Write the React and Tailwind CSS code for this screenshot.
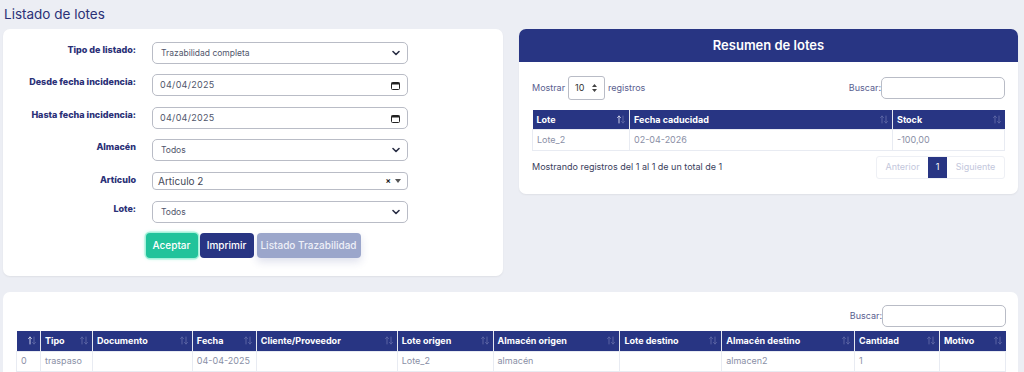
import React from "react";

const font = { fontFamily: "Inter, 'Noto Sans', sans-serif" };

const SortIcon = ({ active }) => (
  <svg width="8" height="9" viewBox="0 0 8 9" className="shrink-0">
    <g fill="none" strokeWidth="1" strokeLinecap="round">
      <path d="M2 8V1M0.5 2.5L2 1l1.5 1.5" stroke={active ? "#c9cde6" : "#5a64a3"} />
      <path d="M6 1v7M4.5 6.5L6 8l1.5-1.5" stroke="#5a64a3" />
    </g>
  </svg>
);

const Chevron = () => (
  <svg width="8" height="6" viewBox="0 0 8 6">
    <path d="M1 1.5l3 3 3-3" fill="none" stroke="#2a2f45" strokeWidth="1.6" strokeLinecap="round" strokeLinejoin="round" />
  </svg>
);

const Calendar = () => (
  <svg width="9" height="9" viewBox="0 0 9 9">
    <rect x="0.5" y="1.5" width="8" height="7" rx="1" fill="none" stroke="#222" strokeWidth="1" />
    <rect x="0.5" y="1.5" width="8" height="2" fill="#222" />
  </svg>
);

const FakeSelect = ({ value }) => (
  <div className="flex h-[22px] w-[256px] items-center justify-between rounded-[5px] border border-[#b9bcc6] bg-white pl-[8px] pr-[7px] text-[8.5px] text-[#50556b]">
    <span>{value}</span>
    <Chevron />
  </div>
);

const DateBox = ({ value }) => (
  <div className="flex h-[22px] w-[256px] items-center justify-between rounded-[5px] border border-[#b9bcc6] bg-white pl-[7px] pr-[7px] text-[9px] text-[#50556b]">
    <span className="tracking-[0.3px]">{value}</span>
    <Calendar />
  </div>
);

const FormRow = ({ label, children, mt }) => (
  <div className={`flex items-start ${mt}`}>
    <div className="w-[133px] pt-[1px] text-right text-[9px] font-extrabold text-[#2b3177]">{label}</div>
    <div className="ml-[16px]">{children}</div>
  </div>
);

const HeadCell = ({ children, w, active }) => (
  <th className={`${w} border-r border-[#e5e8f0] px-[4px] text-left font-bold last:border-r-0`}>
    <div className="flex items-center justify-between">
      <span>{children}</span>
      <SortIcon active={active} />
    </div>
  </th>
);

const Buscar = () => (
  <div className="flex items-center text-[9px] text-[#5a6090]">
    <span>Buscar:</span>
    <div className="h-[22px] w-[124px] rounded-[5px] border border-[#b9bcc6] bg-white" />
  </div>
);

const App = () => {
  const movCols = [
    ["", "w-[24px]", true],
    ["Tipo", "w-[52px]"],
    ["Documento", "w-[100px]"],
    ["Fecha", "w-[64px]"],
    ["Cliente/Proveedor", "w-[141px]"],
    ["Lote origen", "w-[96px]"],
    ["Almacén origen", "w-[127px]"],
    ["Lote destino", "w-[102px]"],
    ["Almacén destino", "w-[133px]"],
    ["Cantidad", "w-[85px]"],
    ["Motivo", "w-[66px]"],
  ];
  const movRow = ["0", "traspaso", "", "04-04-2025", "", "Lote_2", "almacén", "", "almacen2", "1", ""];

  return (
    <div className="min-h-[372px] w-full bg-[#eceef4] pl-[3px] pr-[6px]" style={font}>
      <div className="flex h-[29px] items-center pl-[1px] text-[13.5px] text-[#2b3177]">Listado de lotes</div>

      <div className="flex items-start gap-[16px]">
        <div className="w-[500px] rounded-[7px] bg-white pt-[13px] pb-[18px] shadow-[0_1px_2px_rgba(0,0,0,0.06)]">
          <FormRow label="Tipo de listado:">
            <FakeSelect value="Trazabilidad completa" />
          </FormRow>
          <FormRow label="Desde fecha incidencia:" mt="mt-[10px]">
            <DateBox value="04/04/2025" />
          </FormRow>
          <FormRow label="Hasta fecha incidencia:" mt="mt-[11px]">
            <DateBox value="04/04/2025" />
          </FormRow>
          <FormRow label="Almacén" mt="mt-[10px]">
            <FakeSelect value="Todos" />
          </FormRow>
          <FormRow label="Artículo" mt="mt-[11px]">
            <div className="flex h-[18px] w-[256px] items-center justify-between rounded-[4px] border border-[#b9bcc6] bg-white pl-[5px] pr-[6px] text-[10px] text-[#444857]">
              <span>Articulo 2</span>
              <span className="flex items-center gap-[4px] text-[8px] font-bold text-[#222]">
                <span>×</span>
                <svg width="6" height="4" viewBox="0 0 6 4"><path d="M0 0h6L3 4z" fill="#555" /></svg>
              </span>
            </div>
          </FormRow>
          <FormRow label="Lote:" mt="mt-[11px]">
            <FakeSelect value="Todos" />
          </FormRow>
          <div className="mt-[10px] flex justify-center gap-[2px] text-[10px] font-medium text-white">
            <button className="h-[25px] w-[52px] rounded-[4px] bg-[#21c39b] shadow-[0_0_0_1.5px_#a6f2db,0_0_4px_#9ff0d7]">Aceptar</button>
            <button className="h-[25px] w-[54px] rounded-[4px] bg-[#283583]">Imprimir</button>
            <button className="ml-[1px] h-[25px] w-[104px] rounded-[4px] bg-[#9ba6cb] text-[#eef0f8] shadow-[0_4px_8px_rgba(40,53,131,0.15)]">Listado Trazabilidad</button>
          </div>
        </div>

        <div className="flex-1 overflow-hidden rounded-[7px] bg-white pb-[15px] shadow-[0_1px_2px_rgba(0,0,0,0.06)]">
          <div className="flex h-[33px] items-center justify-center bg-[#283583] text-[13px] font-semibold text-white">Resumen de lotes</div>
          <div className="px-[13px]">
            <div className="mt-[14px] flex items-center justify-between">
              <div className="flex items-center gap-[3px] text-[9px] text-[#5a6090]">
                <span>Mostrar</span>
                <div className="flex h-[24px] w-[37px] items-center justify-between rounded-[3px] border border-[#b9bcc6] pl-[6px] pr-[7px] text-[9px] text-[#333]">
                  <span>10</span>
                  <svg width="5" height="8" viewBox="0 0 5 8"><path d="M0 3L2.5 0 5 3zM0 5l2.5 3L5 5z" fill="#444" /></svg>
                </div>
                <span>registros</span>
              </div>
              <Buscar />
            </div>
            <table className="mt-[10px] w-full border-collapse text-[9px]">
              <thead>
                <tr className="h-[19px] bg-[#283583] text-white">
                  <HeadCell w="w-[97px]" active>Lote</HeadCell>
                  <HeadCell w="w-[263px]">Fecha caducidad</HeadCell>
                  <HeadCell w="">Stock</HeadCell>
                </tr>
              </thead>
              <tbody>
                <tr className="h-[21px] text-[#8a8fa6]">
                  <td className="border border-[#e8ebf2] px-[4px]">Lote_2</td>
                  <td className="border border-[#e8ebf2] px-[4px]">02-04-2026</td>
                  <td className="border border-[#e8ebf2] px-[4px]">-100,00</td>
                </tr>
              </tbody>
            </table>
            <div className="mt-[5px] flex items-center justify-between">
              <span className="text-[9px] text-[#3a3e5c]">Mostrando registros del 1 al 1 de un total de 1</span>
              <div className="flex h-[23px] items-stretch rounded-[3px] border border-[#eef0f5] text-[9px] text-[#c3c7dc]">
                <span className="flex w-[51px] items-center justify-center">Anterior</span>
                <span className="flex w-[19px] items-center justify-center bg-[#283583] text-white">1</span>
                <span className="flex w-[57px] items-center justify-center">Siguiente</span>
              </div>
            </div>
          </div>
        </div>
      </div>

      <div className="mt-[16px] rounded-[7px] bg-white pt-[13px] pl-[13px] pr-[12px] pb-[20px]">
        <div className="flex justify-end">
          <Buscar />
        </div>
        <table className="mt-[4px] w-full border-collapse text-[9px]">
          <thead>
            <tr className="h-[20px] bg-[#283583] text-white">
              {movCols.map(([name, w, active], i) => (
                <HeadCell key={i} w={w} active={active}>{name}</HeadCell>
              ))}
            </tr>
          </thead>
          <tbody>
            <tr className="h-[20px] text-[#8a8fa6]">
              {movRow.map((v, i) => (
                <td key={i} className="border border-[#e8ebf2] px-[4px]">{v}</td>
              ))}
            </tr>
          </tbody>
        </table>
      </div>
    </div>
  );
};

export default App;
